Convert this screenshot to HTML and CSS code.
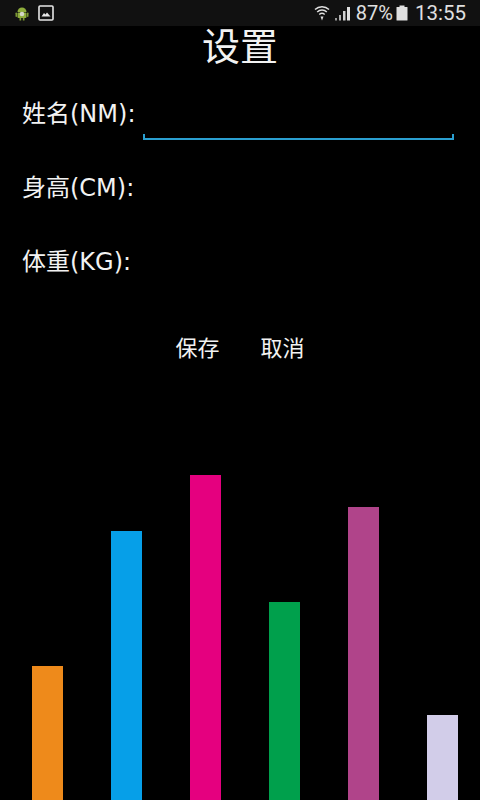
FILE: index.html
```html
<!DOCTYPE html>
<html lang="zh-CN">
<head>
    <meta charset="UTF-8">
    <meta name="viewport" content="width=device-width, initial-scale=1.0">
    <title>设置</title>
    <link rel="stylesheet" href="styles.css">
</head>
<body>
    <div class="status-bar">
        <div class="status-left">
            <svg class="icon-android" width="16" height="16" viewBox="0 0 16 16">
                <path d="M3.5 7a4.500 4.500 0 0 1 9 0z" fill="#8fae3c"/>
                <rect x="3.500" y="7.500" width="9" height="5.500" rx="1" fill="#8fae3c"/>
                <rect x="1.500" y="7.500" width="1.500" height="4.500" rx="0.700" fill="#7d9a35"/>
                <rect x="13" y="7.500" width="1.500" height="4.500" rx="0.700" fill="#7d9a35"/>
                <rect x="5.500" y="13" width="1.700" height="2.500" fill="#7d9a35"/>
                <rect x="8.800" y="13" width="1.700" height="2.500" fill="#7d9a35"/>
                <circle cx="8" cy="9" r="2.300" fill="#d4d8c8"/>
            </svg>
            <svg width="16" height="16" viewBox="0 0 16 16">
                <rect x="1" y="1" width="14" height="14" rx="1" fill="none" stroke="#e6e6e6" stroke-width="1.600"/>
                <path d="M3.500 11.500l2.500-3.500 1.500 1.500 1.500-2 3.500 4z" fill="#e6e6e6"/>
            </svg>
        </div>
        <div class="status-right">
            <svg class="icon-wifi" width="16" height="18" viewBox="0 0 16 18">
                <path d="M1 5.500a10 10 0 0 1 14 0M3.200 8a7 7 0 0 1 9.600 0M5.300 10.500a4 4 0 0 1 5.400 0" fill="none" stroke="#e0e0e0" stroke-width="1.500"/>
                <path d="M6.500 12.500h3l-1.500 4z" fill="#e0e0e0"/>
            </svg>
            <svg class="icon-signal" width="17" height="15" viewBox="0 0 17 15">
                <rect x="1" y="12" width="2" height="2.500" fill="#9a9a9a"/>
                <rect x="5" y="9" width="2" height="5.500" fill="#b0b0b0"/>
                <rect x="9" y="5" width="2.500" height="9.500" fill="#d0d0d0"/>
                <rect x="13" y="1" width="3" height="13.500" fill="#e0e0e0"/>
            </svg>
            <span class="battery-text">87%</span>
            <svg class="icon-battery" width="12" height="16" viewBox="0 0 12 16">
                <rect x="3.500" y="0.500" width="5" height="2" fill="#e0e0e0"/>
                <rect x="0.500" y="2" width="11" height="13.500" rx="0.500" fill="#e0e0e0"/>
            </svg>
            <span class="clock">13:55</span>
        </div>
    </div>

    <h1 class="title">设置</h1>

    <div class="form">
        <div class="form-row">
            <label for="name">姓名(NM):</label>
            <input type="text" id="name" class="field-active">
        </div>
        <div class="form-row">
            <label for="height">身高(CM):</label>
            <input type="text" id="height">
        </div>
        <div class="form-row">
            <label for="weight">体重(KG):</label>
            <input type="text" id="weight">
        </div>
    </div>

    <div class="buttons">
        <button type="button">保存</button>
        <button type="button">取消</button>
    </div>

    <div class="chart">
        <div class="bar" style="height: 134px; background-color: #ee8a1b;"></div>
        <div class="bar" style="height: 269px; background-color: #069fe8;"></div>
        <div class="bar" style="height: 325px; background-color: #e5007f;"></div>
        <div class="bar" style="height: 198px; background-color: #00a04c;"></div>
        <div class="bar" style="height: 293px; background-color: #b0448a;"></div>
        <div class="bar" style="height: 85px; background-color: #d2cde9;"></div>
    </div>
</body>
</html>
```

FILE: styles.css
```css
* {
    box-sizing: border-box;
}
body {
    margin: 0;
    height: 800px;
    overflow: hidden;
    display: flex;
    flex-direction: column;
    background-color: #000;
    color: #f2f2f2;
    font-family: "DejaVu Sans", "Noto Sans CJK SC", sans-serif;
}
.status-bar {
    height: 26px;
    flex-shrink: 0;
    display: flex;
    justify-content: space-between;
    align-items: center;
    padding: 0 14px;
    background-color: #111;
    color: #e0e0e0;
    font-family: Roboto, sans-serif;
}
.status-left {
    display: flex;
    align-items: center;
    gap: 8px;
}
.status-right {
    display: flex;
    align-items: center;
}
.icon-signal {
    margin-left: 4px;
}
.battery-text {
    font-size: 20px;
    margin-left: 5px;
}
.icon-battery {
    margin-left: 3px;
}
.clock {
    font-size: 20.500px;
    margin-left: 7px;
}
.title {
    margin: 0;
    height: 42px;
    line-height: 42px;
    text-align: center;
    font-size: 38px;
    font-weight: 400;
}
.form {
    padding: 8px 26px 0 22px;
}
.form-row {
    height: 74px;
    display: flex;
    align-items: flex-start;
}
label {
    width: 121px;
    flex-shrink: 0;
    font-size: 24px;
    line-height: 76px;
    height: 74px;
    white-space: nowrap;
}
input {
    flex: 1;
    min-width: 0;
    height: 38px;
    margin-top: 26px;
    border: none;
    background: transparent;
    outline: none;
}
.field-active {
    border: 2px solid #2a9fd0;
    border-top: none;
    border-image: linear-gradient(to top, #2a9fd0 6px, transparent 6px) 2;
}
.buttons {
    display: flex;
    justify-content: center;
    gap: 41px;
    margin-top: 36px;
}
button {
    padding: 0;
    background: none;
    border: none;
    color: #f2f2f2;
    font-family: inherit;
    font-size: 22px;
    line-height: 30px;
}
.chart {
    flex: 1;
    display: flex;
    align-items: flex-end;
    gap: 48px;
    padding-left: 32px;
}
.bar {
    width: 31px;
}
```
